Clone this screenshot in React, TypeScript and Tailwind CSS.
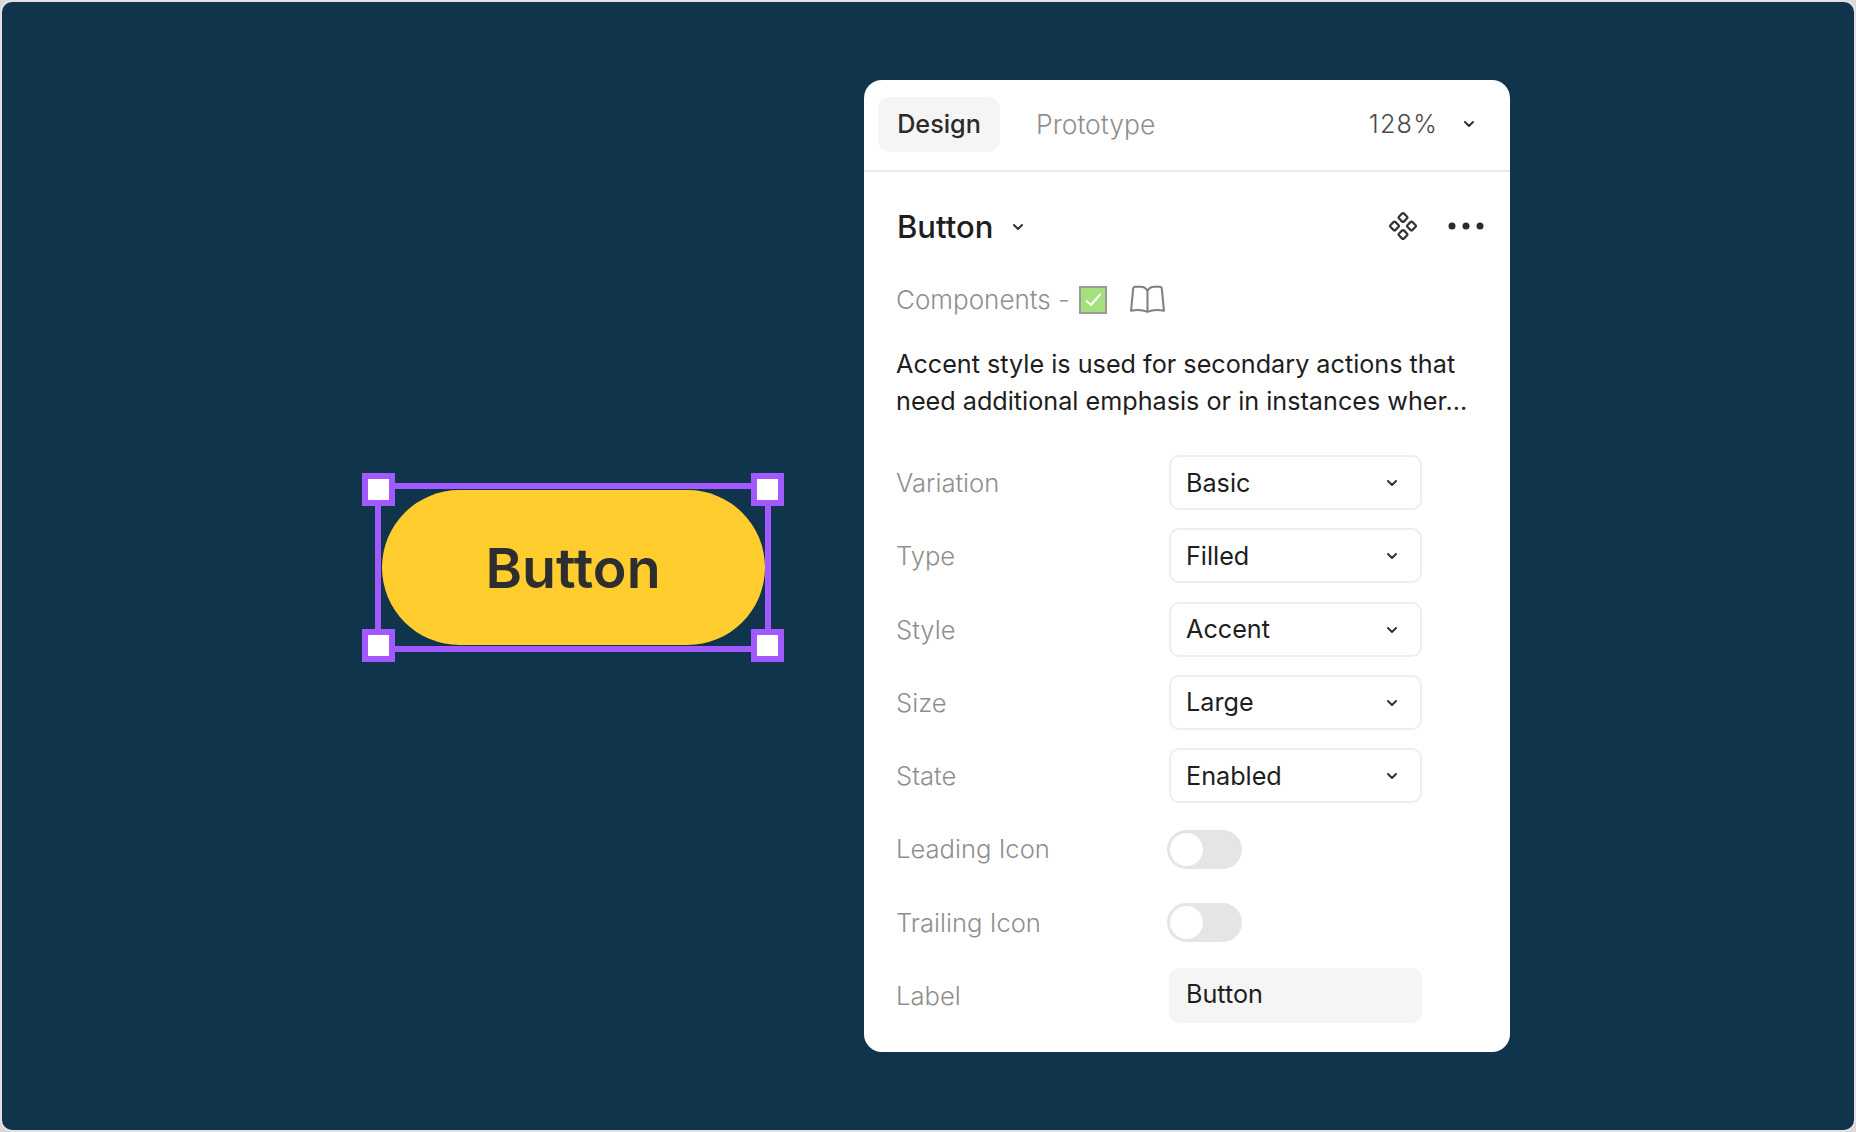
const Chevron = ({ className = "" }: { className?: string }) => (
  <svg viewBox="0 0 12 8" className={`w-[12px] h-[8px] ${className}`} fill="none" stroke="#333333" strokeWidth="2" strokeLinecap="round" strokeLinejoin="round">
    <path d="M2 2l4 4 4-4" />
  </svg>
);

const Handle = ({ className }: { className: string }) => (
  <span className={`absolute w-[33px] h-[33px] bg-white border-[6.5px] border-[#a259ff] ${className}`} />
);

const Select = ({ value }: { value: string }) => (
  <div className="ml-[1px] w-[253px] h-[55px] rounded-[10px] border-2 border-[#eeeeee] flex items-center justify-between pl-[15px] pr-[22px] pt-[1px] text-[#1e1e1e]">
    <span>{value}</span>
    <Chevron />
  </div>
);

const Toggle = () => (
  <div className="-ml-[1px] mt-[1px] w-[75px] h-[39px] rounded-full bg-[#e5e5e5] flex items-center pl-[3px]">
    <span className="w-[33px] h-[33px] rounded-full bg-white" />
  </div>
);

const Row = ({ label, children }: { label: string; children: React.ReactNode }) => (
  <div className="h-[55px] flex items-center">
    <span className="w-[272px] text-[#8f8f8f] font-light text-[25.600px]">{label}</span>
    {children}
  </div>
);

export default function App() {
  return (
    <div className="w-[1856px] h-[1132px] bg-[#d9d9d9]" style={{ fontFamily: "Inter, sans-serif" }}>
      <div className="w-full h-full rounded-[12px] border-2 border-[#e2e2e2] bg-[#11344d] flex items-start pl-[373px] box-border">
        <div className="relative mt-[481px] w-[396px] h-[169px] border-[6px] border-[#a259ff] flex items-center justify-center">
          <div className="w-[383px] h-[155px] shrink-0 rounded-full bg-[#ffcd2e] flex items-center justify-center text-[55.500px] font-[560] text-[#2e2e2e]">
            Button
          </div>
          <Handle className="-left-[19.500px] -top-[16px]" />
          <Handle className="-right-[18.500px] -top-[16px]" />
          <Handle className="-left-[19.500px] -bottom-[16px]" />
          <Handle className="-right-[18.500px] -bottom-[16px]" />
        </div>
        <div className="mt-[78px] ml-[93px] w-[646px] h-[972px] rounded-[18px] bg-white text-[25.200px] leading-[37px] flex flex-col">
          <div className="h-[92px] border-b-2 border-[#e8e8e8] flex items-center pl-[14px] pr-[35px] pb-[2px]">
            <div className="w-[122px] h-[55px] rounded-[12px] bg-[#f5f5f5] flex items-center justify-center font-medium text-[#2b2b2b]">Design</div>
            <div className="ml-[36px] text-[26.500px] text-[#8f8f8f] font-light">Prototype</div>
            <div className="ml-auto text-[#4a4a4a] font-light tracking-[1.200px]">128%</div>
            <Chevron className="ml-[25px]" />
          </div>
          <div className="pl-[32px] pr-[26px] flex flex-col">
            <div className="flex items-center mt-[36px]">
              <span className="ml-[1px] text-[31px] font-medium text-[#1e1e1e]">Button</span>
              <Chevron className="ml-[19px]" />
              <svg viewBox="0 0 30 30" className="ml-auto -mt-[1px] w-[30px] h-[30px] translate-x-[1px]" fill="none" stroke="#333333" strokeWidth="2.200">
                <rect x="11.500" y="3" width="7" height="7" rx="1.500" transform="rotate(45 15 6.500)" />
                <rect x="11.500" y="20" width="7" height="7" rx="1.500" transform="rotate(45 15 23.500)" />
                <rect x="3" y="11.500" width="7" height="7" rx="1.500" transform="rotate(45 6.500 15)" />
                <rect x="20" y="11.500" width="7" height="7" rx="1.500" transform="rotate(45 23.500 15)" />
              </svg>
              <svg viewBox="0 0 36 8" className="ml-[31px] -mt-[2px] w-[36px] h-[8px]" fill="#2b2b2b">
                <circle cx="4" cy="4" r="3.500" />
                <circle cx="18" cy="4" r="3.500" />
                <circle cx="32" cy="4" r="3.500" />
              </svg>
            </div>
            <div className="flex items-center mt-[36px] h-[37px] text-[#8f8f8f] font-light">
              <span className="text-[26px]">Components -</span>
              <svg viewBox="0 0 28 28" className="ml-[9px] w-[28px] h-[28px]">
                <rect x="1" y="1" width="26" height="26" fill="#a5e07c" stroke="#9a9a9a" strokeWidth="2" />
                <path d="M7.500 15l4.500 4 9-10.500" fill="none" stroke="#ffffff" strokeWidth="2" strokeLinecap="round" strokeLinejoin="round" />
              </svg>
              <svg viewBox="0 0 36 28" className="ml-[22px] w-[37px] h-[29px]" fill="none" stroke="#808080" strokeWidth="2" strokeLinejoin="round">
                <path d="M18 6C17 3 14 1.500 11 1.500H6C4.500 1.500 4 2.500 4 4L2 25c5-1 11-1 16 1 5-2 11-2 16-1L32 4c0-1.500-.5-2.500-2-2.500H25C22 1.500 19 3 18 6zM18 6v20" />
              </svg>
            </div>
            <p className="mt-[28px] text-[#1e1e1e] font-normal whitespace-nowrap">
              Accent style is used for secondary actions that
              <br />
              need additional emphasis or in instances wher...
            </p>
            <div className="mt-[35px] flex flex-col gap-[18.300px]">
              <Row label="Variation"><Select value="Basic" /></Row>
              <Row label="Type"><Select value="Filled" /></Row>
              <Row label="Style"><Select value="Accent" /></Row>
              <Row label="Size"><Select value="Large" /></Row>
              <Row label="State"><Select value="Enabled" /></Row>
              <Row label="Leading Icon"><Toggle /></Row>
              <Row label="Trailing Icon"><Toggle /></Row>
              <Row label="Label">
                <div className="ml-[1px] w-[253px] h-[55px] rounded-[10px] bg-[#f5f5f5] flex items-center pl-[17px] pb-[2px] text-[#1e1e1e]">Button</div>
              </Row>
            </div>
          </div>
        </div>
      </div>
    </div>
  );
}
